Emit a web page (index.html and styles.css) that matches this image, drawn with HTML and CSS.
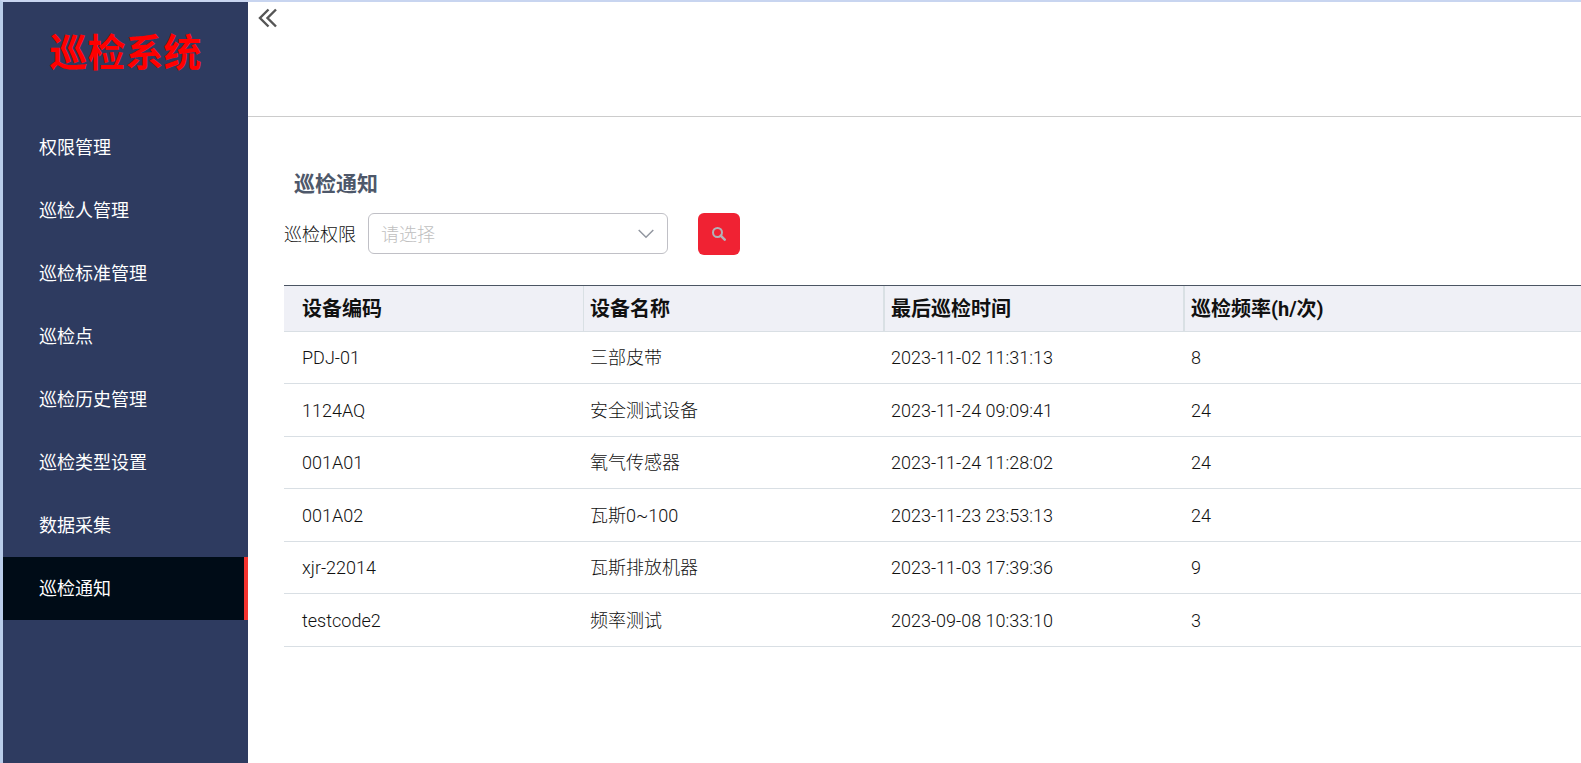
FILE: index.html
```html
<!DOCTYPE html>
<html lang="zh-CN">
<head>
<meta charset="utf-8">
<title>巡检系统</title>
<link rel="stylesheet" href="styles.css">
</head>
<body>
<div class="app">
  <aside class="sidebar">
    <h1 class="brand">巡检系统</h1>
    <nav class="menu">
      <a class="menu-item" href="#auth">权限管理</a>
      <a class="menu-item" href="#people">巡检人管理</a>
      <a class="menu-item" href="#standard">巡检标准管理</a>
      <a class="menu-item" href="#point">巡检点</a>
      <a class="menu-item" href="#history">巡检历史管理</a>
      <a class="menu-item" href="#type">巡检类型设置</a>
      <a class="menu-item" href="#data">数据采集</a>
      <a class="menu-item active" href="#notice" aria-current="page">巡检通知</a>
    </nav>
  </aside>
  <div class="main">
    <header class="topbar">
      <button class="collapse" type="button" aria-label="收起菜单">
        <svg width="20" height="20" viewBox="0 0 20 20" fill="none" stroke="currentColor" stroke-width="2.400"><path d="M10.500 1.500 2 10 10.500 18.500M18 1.500 9.500 10 18 18.500"/></svg>
      </button>
    </header>
    <main class="content">
      <h2 class="title">巡检通知</h2>
      <form class="filter">
        <label class="label" for="auth">巡检权限</label>
        <div class="select-wrap">
          <select class="select" id="auth"><option>请选择</option></select>
          <svg class="arrow" width="16" height="10" viewBox="0 0 16 10" fill="none" stroke="currentColor" stroke-width="1.500"><path d="M.7 1 8 8.200 15.300 1"/></svg>
        </div>
        <button class="search" type="button" aria-label="搜索">
          <svg width="14" height="14" viewBox="0 0 14 14" fill="none" stroke="currentColor"><circle cx="5.500" cy="5.500" r="4.500" stroke-width="2"/><path d="M8.700 8.700 12.700 12.700" stroke-width="2.500" stroke-linecap="round"/></svg>
        </button>
      </form>
      <table class="grid">
        <thead>
          <tr><th>设备编码</th><th>设备名称</th><th>最后巡检时间</th><th>巡检频率(h/次)</th></tr>
        </thead>
        <tbody>
          <tr><td>PDJ-01</td><td>三部皮带</td><td>2023-11-02 11:31:13</td><td>8</td></tr>
          <tr><td>1124AQ</td><td>安全测试设备</td><td>2023-11-24 09:09:41</td><td>24</td></tr>
          <tr><td>001A01</td><td>氧气传感器</td><td>2023-11-24 11:28:02</td><td>24</td></tr>
          <tr><td>001A02</td><td>瓦斯0~100</td><td>2023-11-23 23:53:13</td><td>24</td></tr>
          <tr><td>xjr-22014</td><td>瓦斯排放机器</td><td>2023-11-03 17:39:36</td><td>9</td></tr>
          <tr><td>testcode2</td><td>频率测试</td><td>2023-09-08 10:33:10</td><td>3</td></tr>
        </tbody>
      </table>
    </main>
  </div>
</div>
</body>
</html>
```
FILE: styles.css
```css
* { box-sizing: border-box; }

body {
  margin: 0;
  color: #111;
  font: 18px/24px Roboto, "Noto Sans CJK SC", sans-serif;
}

.app {
  display: flex;
  min-height: 100vh;
  border-top: 2px solid #c8d5f0;
  border-left: 3px solid #b9cdea;
}

.sidebar {
  flex: none;
  width: 245px;
  background: #2e3b60;
}

.brand {
  margin: 0;
  height: 114px;
  padding-top: 22px;
  color: #f00;
  font-size: 38px;
  line-height: 58px;
  font-weight: 700;
  text-align: center;
}

.menu { display: flex; flex-direction: column; }

.menu-item {
  height: 63px;
  padding-left: 36px;
  color: #fff;
  line-height: 64px;
  text-decoration: none;
}

.menu-item.active {
  background: #000c17;
  border-right: 4px solid #f5342f;
}

.main { flex: 1; min-width: 0; }

.topbar {
  height: 115px;
  padding: 6px 10px;
  border-bottom: 1px solid #ccc;
}

button { padding: 0; border: 0; cursor: pointer; }

.collapse {
  display: flex;
  background: none;
  color: #555;
}

.content { padding: 52px 0 0 36px; }

.title {
  margin: 0 0 14px;
  padding-left: 10px;
  color: #4e586a;
  font-size: 21px;
  line-height: 30px;
  font-weight: 700;
}

.filter {
  display: flex;
  align-items: flex-start;
  margin-bottom: 30px;
}

.label {
  width: 84px;
  height: 42px;
  line-height: 44px;
  font-weight: 300;
}

.select-wrap { position: relative; width: 300px; }

.select {
  display: block;
  width: 100%;
  height: 41px;
  padding: 2px 12px 0;
  appearance: none;
  border: 1px solid #c0c0c6;
  border-radius: 6px;
  background: #fff;
  color: #c0c0c0;
  font: inherit;
  font-weight: 300;
}

.arrow {
  position: absolute;
  top: 16px;
  right: 14px;
  color: #9297a0;
  pointer-events: none;
}

.search {
  display: flex;
  justify-content: center;
  align-items: center;
  width: 42px;
  height: 42px;
  margin-left: 30px;
  border-radius: 6px;
  background: #f02233;
  color: #b2b2b8;
}

.grid {
  width: 100%;
  table-layout: fixed;
  border-spacing: 0;
  border-top: 1px solid #4b5563;
}

.grid th, .grid td {
  padding: 1px 6px 0;
  border-bottom: 1px solid #d9dfe4;
  text-align: left;
}

.grid th:first-child, .grid td:first-child { padding-left: 18px; }

.grid th {
  width: 300px;
  height: 46px;
  border-right: 2px solid #d9e0e4;
  background: #eff0f6;
  font-size: 20px;
}

.grid th:first-child { border-right-width: 1px; }

.grid th:nth-child(2) { width: 301px; }

.grid th:last-child { width: auto; border-right: 0; }

.grid td { height: 52px; font-weight: 300; }

.grid tr:nth-child(even) td { height: 53px; }
```
